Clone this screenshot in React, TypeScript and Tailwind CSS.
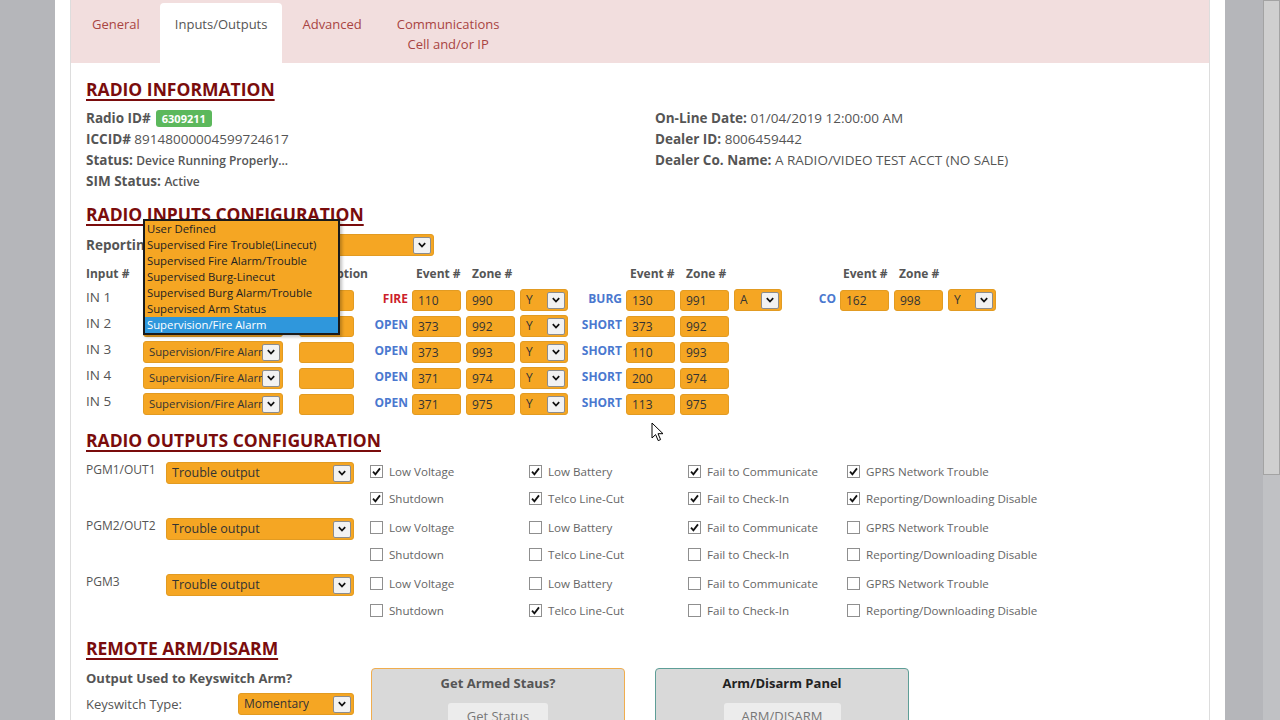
import React from "react";

const tabs = ["General", "Inputs/Outputs", "Advanced"];

const menuItems = [
  "User Defined",
  "Supervised Fire Trouble(Linecut)",
  "Supervised Fire Alarm/Trouble",
  "Supervised Burg-Linecut",
  "Supervised Burg Alarm/Trouble",
  "Supervised Arm Status",
  "Supervision/Fire Alarm",
];

const inputRows = [
  { name: "IN 1", a: ["FIRE", "110", "990", "Y"], b: ["BURG", "130", "991", "A"], c: ["CO", "162", "998", "Y"] },
  { name: "IN 2", a: ["OPEN", "373", "992", "Y"], b: ["SHORT", "373", "992"] },
  { name: "IN 3", a: ["OPEN", "373", "993", "Y"], b: ["SHORT", "110", "993"] },
  { name: "IN 4", a: ["OPEN", "371", "974", "Y"], b: ["SHORT", "200", "974"] },
  { name: "IN 5", a: ["OPEN", "371", "975", "Y"], b: ["SHORT", "113", "975"] },
];

const row1Labels = ["Low Voltage", "Low Battery", "Fail to Communicate", "GPRS Network Trouble"];
const row2Labels = ["Shutdown", "Telco Line-Cut", "Fail to Check-In", "Reporting/Downloading Disable"];

const outputs = [
  { name: "PGM1/OUT1", r1: [true, true, true, true], r2: [true, true, true, true] },
  { name: "PGM2/OUT2", r1: [false, false, true, false], r2: [false, false, false, false] },
  { name: "PGM3", r1: [false, false, false, false], r2: [false, true, false, false] },
];

const Chevron = () => (
  <svg viewBox="0 0 10 10" className="h-[10px] w-[10px]">
    <path d="M1.8 3.2 L5 6.6 L8.2 3.2" stroke="#111" strokeWidth="1.7" fill="none" />
  </svg>
);

const Select = ({ value, className = "" }: { value: string; className?: string }) => (
  <div
    className={`flex items-center justify-between rounded-[3px] border border-[#e29b22] bg-[#f5a623] pl-[5px] pr-[2px] text-[#333] ${className}`}
  >
    <span className="overflow-hidden whitespace-nowrap">{value}</span>
    <span className="flex h-[17px] w-[18px] shrink-0 items-center justify-center rounded-[2px] border border-[#8c8c8c] bg-[#f2f2f2]">
      <Chevron />
    </span>
  </div>
);

const Box = ({ value, className = "w-[49px]" }: { value?: string; className?: string }) => (
  <div
    className={`h-[21px] rounded-[3px] border border-[#e29b22] bg-[#f5a623] pl-[5px] text-[12px] leading-[20px] text-[#333] ${className}`}
  >
    {value}
  </div>
);

const Check = ({ on }: { on: boolean }) => (
  <span className="flex h-[13px] w-[13px] shrink-0 items-center justify-center border border-[#8f8f8f] bg-white">
    {on && (
      <svg viewBox="0 0 12 12" className="h-[11px] w-[11px]">
        <path d="M2.2 6.2 L4.8 9 L9.8 2.6" stroke="#111" strokeWidth="2" fill="none" />
      </svg>
    )}
  </span>
);

const Heading = ({ children }: { children: React.ReactNode }) => (
  <h2 className="h-[22px] text-[17.5px] font-bold leading-[22px] text-[#7a0c0c] underline decoration-[1.5px] underline-offset-[3px]">
    {children}
  </h2>
);

const EventGroup = ({ g, withSelect }: { g?: string[]; withSelect: boolean }) => {
  if (!g) return <div className="w-[220px]" />;
  const red = g[0] === "FIRE";
  return (
    <div className="flex items-center">
      <div
        className={`w-[58px] -translate-y-[1px] pr-[4px] text-right text-[12px] font-bold ${red ? "text-[#cc1f2b]" : "text-[#4a78cf]"}`}
      >
        {g[0]}
      </div>
      <Box value={g[1]} />
      <Box value={g[2]} className="ml-[5px] w-[49px]" />
      {withSelect && g[3] ? <Select value={g[3]} className="ml-[5px] h-[22px] w-[48px] text-[12px]" /> : null}
    </div>
  );
};

const EventHeader = () => (
  <div className="flex text-[12px] font-bold text-[#555]">
    <div className="w-[58px]" />
    <div className="w-[54px] pl-[4px]">Event #</div>
    <div className="w-[54px] pl-[6px]">Zone #</div>
  </div>
);

export default function App() {
  return (
    <div
      className="relative flex h-[720px] w-[1280px] overflow-hidden bg-[#b5b6ba] text-[13.5px] text-[#555]"
      style={{ fontFamily: '"Open Sans", "Noto Sans", sans-serif' }}
    >
      <div className="w-[55px] shrink-0" />
      <div className="w-[1170px] shrink-0 bg-white px-[15px]">
        {/* tab strip */}
        <div className="flex h-[63px] items-end gap-[5px] border-x border-[#ddd] bg-[#f2dede] pl-[6px] text-[13px] text-[#a94442]">
          {tabs.map((t) => (
            <div
              key={t}
              className={`h-[60px] px-[15px] pt-[11px] leading-[20px] ${t === "Inputs/Outputs" ? "rounded-t-[4px] bg-white text-[#555]" : ""}`}
            >
              {t}
            </div>
          ))}
          <div className="h-[60px] px-[15px] pt-[11px] text-center leading-[20px]">
            Communications
            <br />
            Cell and/or IP
          </div>
        </div>

        <div className="h-[657px] border-x border-[#ddd] px-[15px] pt-[15px]">
          {/* radio information */}
          <Heading>RADIO INFORMATION</Heading>
          <div className="mt-[8px] flex">
            <div className="w-[569px] leading-[21px]">
              <div className="flex h-[21px] items-center">
                <b>Radio ID#</b>
                <span className="ml-[5px] rounded-[3px] bg-[#5cb85c] px-[6px] text-[11px] font-bold leading-[17px] text-white">
                  6309211
                </span>
              </div>
              <div>
                <b>ICCID#</b> 89148000004599724617
              </div>
              <div>
                <b>Status:</b> <span className="text-[12px] font-semibold">Device Running Properly...</span>
              </div>
              <div>
                <b>SIM Status:</b> <span className="text-[12px] font-semibold">Active</span>
              </div>
            </div>
            <div className="leading-[21px]">
              <div>
                <b>On-Line Date:</b> 01/04/2019 12:00:00 AM
              </div>
              <div>
                <b>Dealer ID:</b> 8006459442
              </div>
              <div>
                <b>Dealer Co. Name:</b> A RADIO/VIDEO TEST ACCT (NO SALE)
              </div>
            </div>
          </div>

          {/* inputs */}
          <div className="relative mt-[11px]">
            <Heading>RADIO INPUTS CONFIGURATION</Heading>
            <div className="mt-[8px] flex h-[24px] items-center">
              <div className="w-[114px] font-bold">Reporting Mode:</div>
              <Select value="Supervision/Fire Alarm" className="h-[22px] w-[234px] text-[12px]" />
            </div>
            <div className="mt-[8px] flex h-[18px] items-center text-[12px] font-bold">
              <div className="w-[213px]">Input #</div>
              <div className="w-[55px] whitespace-nowrap">Description</div>
              <EventHeader />
              <div className="ml-[48px]" />
              <EventHeader />
              <div className="ml-[47px]" />
              <EventHeader />
            </div>
            <div className="mt-[4px]">
              {inputRows.map((r) => (
                <div key={r.name} className="flex h-[26px] items-center">
                  <div className="w-[57px] -translate-y-[3px]">{r.name}</div>
                  <Select value="Supervision/Fire Alarm" className="h-[22px] w-[140px] text-[11.3px]" />
                  <Box className="ml-[16px] w-[55px]" />
                  <EventGroup g={r.a} withSelect />
                  <EventGroup g={r.b} withSelect />
                  {r.c ? <EventGroup g={r.c} withSelect /> : null}
                </div>
              ))}
            </div>

            {/* open dropdown list */}
            <div className="absolute left-[57px] top-[16px] w-[197px] border-2 border-[#1a1a1a] bg-[#f5a623] text-[11.3px] leading-[16px] text-[#222] shadow-[2px_2px_3px_rgba(0,0,0,0.25)]">
              {menuItems.map((m) => (
                <div
                  key={m}
                  className={`whitespace-nowrap pl-[2px] ${m === "Supervision/Fire Alarm" ? "bg-[#2f97dc] text-white" : ""}`}
                >
                  {m}
                </div>
              ))}
            </div>
          </div>

          {/* outputs */}
          <div className="mt-[12px]">
            <Heading>RADIO OUTPUTS CONFIGURATION</Heading>
            <div className="mt-[7px]">
              {outputs.map((o) => (
                <div key={o.name} className="flex h-[56px]">
                  <div className="w-[80px] pt-[3px] text-[12px]">{o.name}</div>
                  <Select value="Trouble output" className="mt-[4px] h-[22px] w-[188px] text-[12.5px]" />
                  <div className="ml-[16px]">
                    {[o.r1, o.r2].map((row, ri) => (
                      <div key={ri} className="flex h-[27px] items-center">
                        {row.map((on, ci) => (
                          <div key={ci} className="flex w-[159px] items-center gap-[6px] text-[11.6px] text-[#666]">
                            <Check on={on} />
                            <span className="whitespace-nowrap">{(ri === 0 ? row1Labels : row2Labels)[ci]}</span>
                          </div>
                        ))}
                      </div>
                    ))}
                  </div>
                </div>
              ))}
            </div>
          </div>

          {/* remote arm/disarm */}
          <div className="mt-[11px]">
            <Heading>REMOTE ARM/DISARM</Heading>
            <div className="mt-[9px] flex">
              <div className="w-[285px] text-[13px] leading-[20px]">
                <div className="font-bold">Output Used to Keyswitch Arm?</div>
                <div className="mt-[5px] flex items-center">
                  <div className="w-[152px]">Keyswitch Type:</div>
                  <Select value="Momentary" className="h-[22px] w-[116px] text-[12px]" />
                </div>
              </div>
              <div className="h-[80px] w-[254px] rounded-[4px] border border-[#f0ad4e] bg-[#d9d9d9] pt-[5px] text-center text-[13px]">
                <div className="font-bold text-[#555]">Get Armed Staus?</div>
                <div className="mx-auto mt-[9px] w-[100px] rounded-[3px] bg-[#ececec] py-[4px] text-[#777]">Get Status</div>
              </div>
              <div className="ml-[30px] h-[80px] w-[254px] rounded-[4px] border border-[#5e9e97] bg-[#d9d9d9] pt-[5px] text-center text-[13px]">
                <div className="font-bold text-[#222]">Arm/Disarm Panel</div>
                <div className="mx-auto mt-[9px] w-[117px] rounded-[3px] bg-[#ececec] py-[4px] text-[#777]">ARM/DISARM</div>
              </div>
            </div>
          </div>
        </div>
      </div>
      <div className="flex-1" />
      {/* page scrollbar */}
      <div className="flex w-[17px] shrink-0 flex-col bg-[#c0c1c4]">
        <div className="h-[475px] border border-[#a3a3a3] bg-[#cfcfcf]" />
      </div>

      {/* mouse cursor */}
      <svg className="absolute left-[651px] top-[422px] h-[20px] w-[13px]" viewBox="0 0 13 20">
        <path d="M1 1 L1 16 L4.6 12.6 L7.2 18.6 L9.6 17.6 L7 11.7 L12 11.7 Z" fill="#fff" stroke="#000" strokeWidth="1" />
      </svg>
    </div>
  );
}
